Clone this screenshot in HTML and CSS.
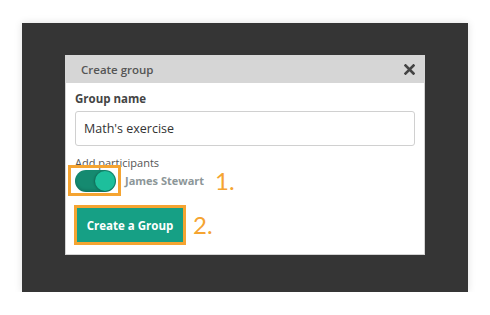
FILE: index.html
```html
<!DOCTYPE html>
<html>
<head>
<meta charset="utf-8">
<link rel="stylesheet" href="styles.css">
</head>
<body>
<div class="frame">
  <div class="dialog">
    <div class="dialog-header">
      <span class="title">Create group</span>
      <svg class="close" width="11" height="11" viewBox="0 0 11 11"><path d="M1.5 1.5 L9.5 9.5 M9.5 1.5 L1.5 9.5" stroke="#444" stroke-width="2.6" stroke-linecap="square"/></svg>
    </div>
    <div class="dialog-body">
      <div class="label">Group name</div>
      <div class="input">Math's exercise</div>
      <div class="sub-label">Add participants</div>
      <div class="toggle-row">
        <span class="mark mark-toggle"><span class="toggle"><span class="knob"></span></span></span>
        <span class="person">James Stewart</span>
        <span class="step step-1">1.</span>
      </div>
      <div class="button-row">
        <span class="mark"><span class="button">Create a Group</span></span>
        <span class="step step-2">2.</span>
      </div>
    </div>
  </div>
</div>
</body>
</html>
```
FILE: styles.css
```css
html, body {
  margin: 0;
  padding: 0;
  background: #fff;
  font-family: "Open Sans", "Liberation Sans", sans-serif;
}
.frame {
  margin: 23px 0 0 22px;
  width: 446px;
  height: 269px;
  box-sizing: border-box;
  background: #353535;
  box-shadow: 0 0 8px rgba(0,0,0,0.12);
  padding: 32px 0 0 43px;
}
.dialog {
  width: 360px;
  height: 200px;
  box-sizing: border-box;
  background: #fff;
  border: 1px solid #d4d4d4;
  border-top: none;
  display: flex;
  flex-direction: column;
}
.dialog-header {
  height: 28px;
  background: #d6d6d6;
  display: flex;
  align-items: center;
  justify-content: space-between;
  padding: 0 10px 0 16px;
  margin: 0 -1px;
}
.title {
  font-size: 11.5px;
  font-weight: 600;
  color: #555;
}
.close {
  display: block;
}
.dialog-body {
  padding: 8px 9px 0 9px;
  display: flex;
  flex-direction: column;
}
.label {
  font-size: 11.5px;
  font-weight: 700;
  color: #444;
  line-height: 16px;
}
.input {
  margin-top: 4px;
  height: 35px;
  box-sizing: border-box;
  border: 1px solid #d0d0d0;
  border-radius: 3px;
  padding: 0 8px;
  display: flex;
  align-items: center;
  font-size: 12.5px;
  color: #333;
}
.sub-label {
  margin-top: 9px;
  font-size: 11px;
  color: #555;
  line-height: 16px;
}
.toggle-row {
  display: flex;
  align-items: center;
  margin-top: -6px;
  margin-left: -7px;
}
.mark {
  border: 3px solid #f5a431;
  display: inline-flex;
  box-sizing: border-box;
  position: relative;
}
.mark-toggle {
  width: 53px;
  height: 31px;
  align-items: center;
  justify-content: center;
  padding-left: 1px;
}
.toggle {
  width: 41px;
  height: 22px;
  border-radius: 11px;
  background: #158a70;
  display: flex;
  align-items: center;
  justify-content: flex-end;
  box-shadow: inset 0 -2px 3px rgba(0,0,0,0.15);
}
.knob {
  width: 20px;
  height: 20px;
  border-radius: 50%;
  background: #1dbf9c;
  margin-right: 1px;
  box-shadow: -1px 0 2px rgba(0,0,0,0.25);
}
.person {
  margin-left: 4px;
  font-size: 11px;
  font-weight: 700;
  color: #8c9698;
}
.step {
  color: #f5a431;
  font-family: "Lato", "Open Sans", sans-serif;
  font-size: 24px;
  line-height: 24px;
}
.step-1 {
  margin-left: 11px;
}
.button-row {
  display: flex;
  align-items: center;
  margin-top: 9px;
  margin-left: -1px;
}
.button {
  width: 106px;
  height: 34px;
  background: #16a085;
  color: #fff;
  font-size: 11.5px;
  font-weight: 700;
  display: flex;
  align-items: center;
  justify-content: center;
}
.step-2 {
  margin-left: 7px;
}
```
